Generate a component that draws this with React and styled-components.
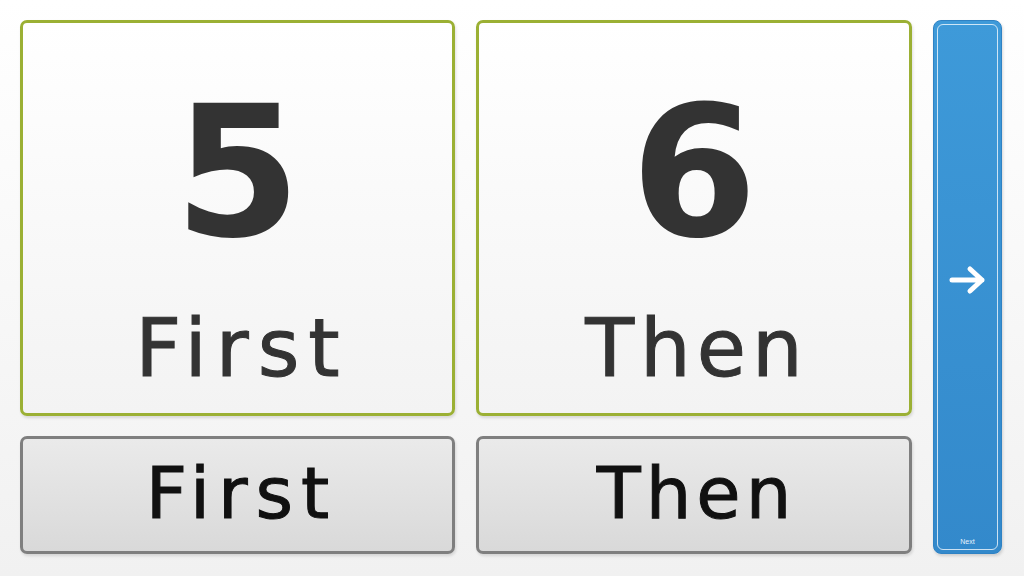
import React from "react";
import styled, { createGlobalStyle } from "styled-components";

const Global = createGlobalStyle`
  html, body {
    margin: 0;
    padding: 0;
  }
  body {
    background: linear-gradient(to bottom, #ffffff, #f1f1f1);
    font-family: "DejaVu Sans", "Liberation Sans", sans-serif;
  }
`;

const Board = styled.div`
  width: 1024px;
  height: 576px;
  box-sizing: border-box;
  padding: 20px 22px 22px 20px;
  display: grid;
  grid-template-columns: 435px 436px 69px;
  grid-template-rows: 396px 118px;
  column-gap: 21px;
  row-gap: 20px;
`;

const Card = styled.div`
  box-sizing: border-box;
  border: 3px solid #9bb034;
  border-radius: 7px;
  background: linear-gradient(to bottom, #ffffff, #f3f3f3);
  box-shadow: 1px 2px 3px rgba(0, 0, 0, 0.12);
  display: flex;
  flex-direction: column;
  align-items: center;
  color: #333333;
`;

const Digit = styled.div`
  font-weight: bold;
  font-size: 182px;
  line-height: 1;
  margin-top: 58px;
  height: 182px;
`;

const Word = styled.div`
  font-size: ${(p) => p.$size}px;
  line-height: 1;
  letter-spacing: ${(p) => p.$spacing}px;
  margin-top: ${(p) => p.$top || 0}px;
  margin-right: -${(p) => p.$spacing}px;
  -webkit-text-stroke: 1px currentColor;
`;

const Label = styled.div`
  box-sizing: border-box;
  border: 3px solid #7f7f7f;
  border-radius: 7px;
  background: linear-gradient(to bottom, #eaeaea, #d9d9d9);
  box-shadow: 1px 2px 3px rgba(0, 0, 0, 0.12);
  display: flex;
  align-items: center;
  justify-content: center;
  color: #111111;
  padding-bottom: 4px;
`;

const NextButton = styled.div`
  grid-column: 3;
  grid-row: 1 / span 2;
  position: relative;
  box-sizing: border-box;
  border: 1px solid #2f82c4;
  border-radius: 8px;
  background: linear-gradient(to bottom, #3e9ad9, #3389cb);
  box-shadow: 1px 2px 3px rgba(0, 0, 0, 0.15);
  display: flex;
  flex-direction: column;
  align-items: center;
  justify-content: flex-end;
  padding-bottom: 8px;
  &::before {
    content: "";
    position: absolute;
    inset: 3px;
    border: 1px solid rgba(255, 255, 255, 0.75);
    border-radius: 6px;
  }
`;

const ArrowBox = styled.div`
  position: absolute;
  top: 244px;
  left: 0;
  right: 0;
  display: flex;
  justify-content: center;
`;

const NextText = styled.div`
  font-family: "Liberation Sans", sans-serif;
  font-size: 7px;
  color: #e8f2fb;
`;

export default function App() {
  return (
    <>
      <Global />
      <Board>
        <Card>
          <Digit>5</Digit>
          <Word $size={80} $spacing={9} $top={46}>First</Word>
        </Card>
        <Card>
          <Digit>6</Digit>
          <Word $size={80} $spacing={6} $top={46}>Then</Word>
        </Card>
        <NextButton>
          <ArrowBox>
            <svg width="38" height="30" viewBox="0 0 38 30">
              <path
                d="M3 15 H33 M21 4 L33 15 L21 26"
                fill="none"
                stroke="#ffffff"
                strokeWidth="5"
                strokeLinecap="round"
                strokeLinejoin="round"
              />
            </svg>
          </ArrowBox>
          <NextText>Next</NextText>
        </NextButton>
        <Label>
          <Word $size={72} $spacing={8}>First</Word>
        </Label>
        <Label>
          <Word $size={72} $spacing={5}>Then</Word>
        </Label>
      </Board>
    </>
  );
}
